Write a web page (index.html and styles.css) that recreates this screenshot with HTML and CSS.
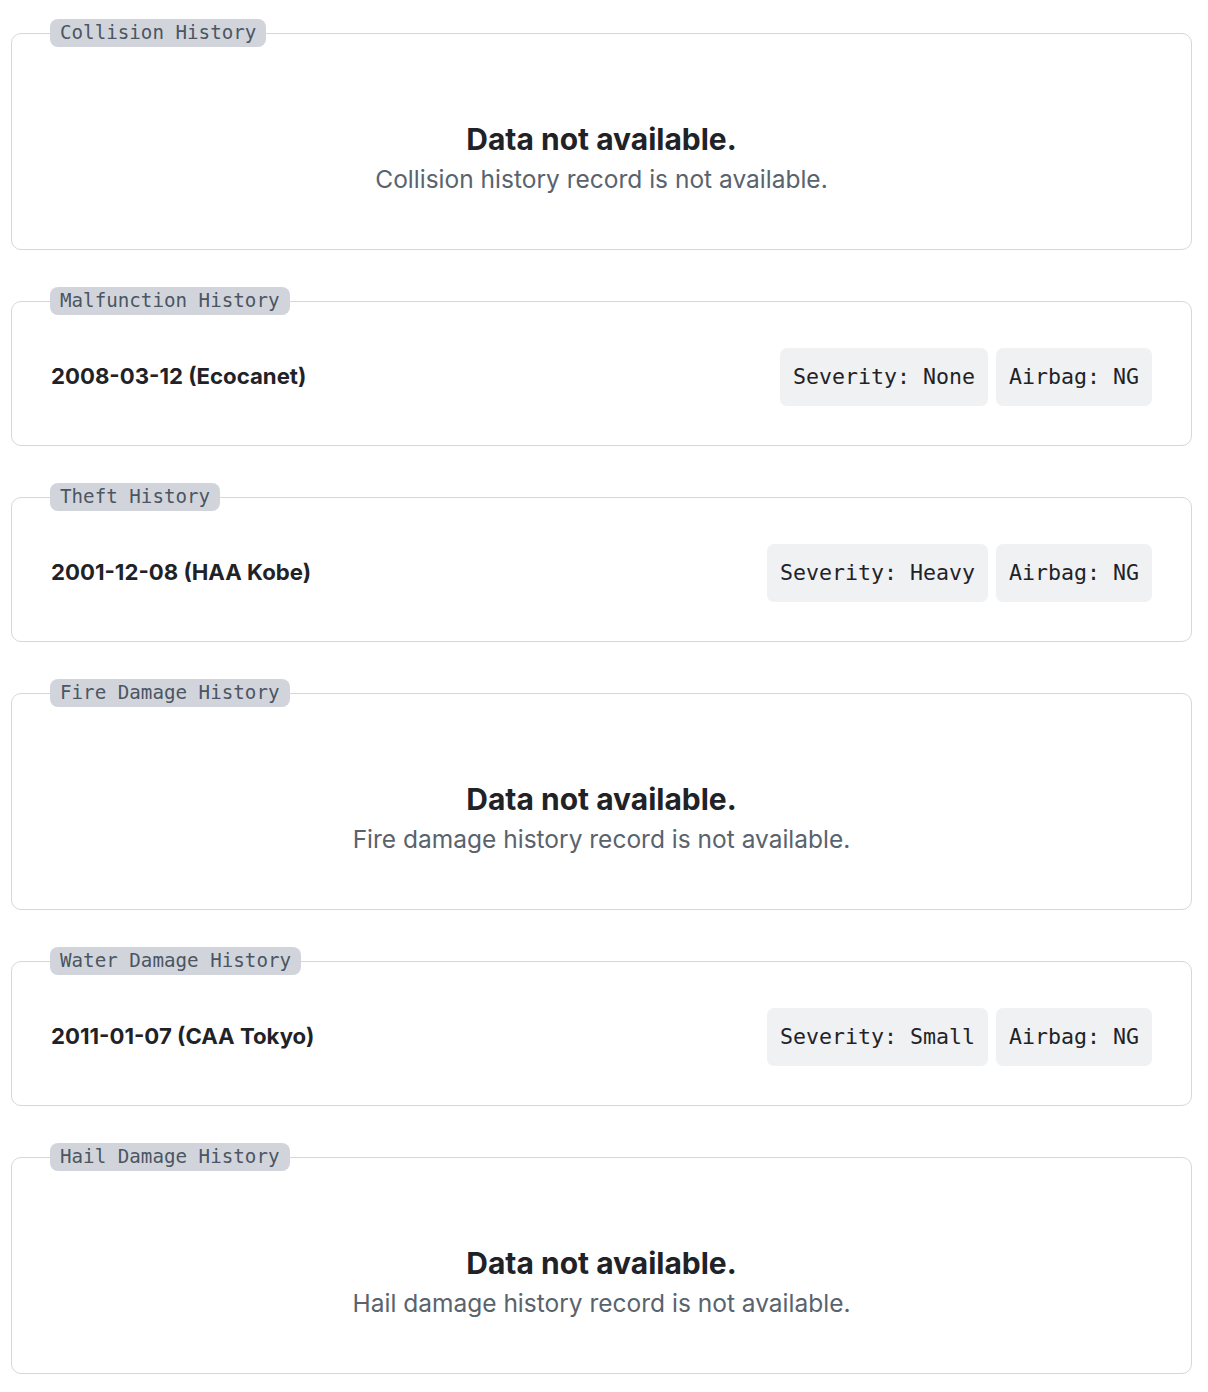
FILE: index.html
```html
<!DOCTYPE html>
<html lang="en">
<head>
<meta charset="utf-8">
<title>Vehicle History</title>
<link rel="stylesheet" href="styles.css">
</head>
<body>
<main class="history-list">
  <fieldset class="section section-empty">
    <legend class="section-label">Collision History</legend>
    <div class="empty-state">
      <div class="empty-title">Data not available.</div>
      <div class="empty-text">Collision history record is not available.</div>
    </div>
  </fieldset>

  <fieldset class="section">
    <legend class="section-label">Malfunction History</legend>
    <div class="record">
      <div class="record-date">2008-03-12 (Ecocanet)</div>
      <div class="badges">
        <span class="badge">Severity: None</span>
        <span class="badge">Airbag: NG</span>
      </div>
    </div>
  </fieldset>

  <fieldset class="section">
    <legend class="section-label">Theft History</legend>
    <div class="record">
      <div class="record-date">2001-12-08 (HAA Kobe)</div>
      <div class="badges">
        <span class="badge">Severity: Heavy</span>
        <span class="badge">Airbag: NG</span>
      </div>
    </div>
  </fieldset>

  <fieldset class="section section-empty">
    <legend class="section-label">Fire Damage History</legend>
    <div class="empty-state">
      <div class="empty-title">Data not available.</div>
      <div class="empty-text">Fire damage history record is not available.</div>
    </div>
  </fieldset>

  <fieldset class="section">
    <legend class="section-label">Water Damage History</legend>
    <div class="record">
      <div class="record-date">2011-01-07 (CAA Tokyo)</div>
      <div class="badges">
        <span class="badge">Severity: Small</span>
        <span class="badge">Airbag: NG</span>
      </div>
    </div>
  </fieldset>

  <fieldset class="section section-empty">
    <legend class="section-label">Hail Damage History</legend>
    <div class="empty-state">
      <div class="empty-title">Data not available.</div>
      <div class="empty-text">Hail damage history record is not available.</div>
    </div>
  </fieldset>
</main>
</body>
</html>
```

FILE: styles.css
```css
html, body {
  margin: 0;
  padding: 0;
  background: #ffffff;
}

body {
  font-family: Inter, "Noto Sans", "Liberation Sans", sans-serif;
  color: #1f2328;
}

.history-list {
  display: flex;
  flex-direction: column;
  gap: 37px;
  padding: 19px 16px 20px 11px;
}

.section {
  margin: 0;
  min-width: 0;
  border: 1px solid #d1d9e0;
  border-radius: 10px;
  padding: 33px 39px 39px 39px;
}

.section-label {
  padding: 0 10px;
  margin-left: -1px;
  background: #d1d5db;
  color: #4b5563;
  border-radius: 8px;
  font-family: "DejaVu Sans Mono", "Liberation Mono", monospace;
  font-size: 19.2px;
  line-height: 28px;
}

.record {
  display: flex;
  align-items: center;
  justify-content: space-between;
}

.record-date {
  font-weight: 700;
  font-size: 22.2px;
  padding-bottom: 4px;
  color: #1f2328;
}

.badges {
  display: flex;
  gap: 8px;
}

.badge {
  background: #eff1f3;
  border-radius: 7px;
  padding: 0 13px;
  font-family: "DejaVu Sans Mono", "Liberation Mono", monospace;
  font-size: 21.6px;
  line-height: 58px;
  color: #1f2328;
}

.section-empty {
  padding: 0 39px;
}

.empty-state {
  display: flex;
  flex-direction: column;
  align-items: center;
  padding: 74px 0 54px;
}

.empty-title {
  font-weight: 700;
  font-size: 30px;
  line-height: 36px;
  color: #1f2328;
}

.empty-text {
  margin-top: 6px;
  font-size: 24.5px;
  line-height: 32px;
  color: #59636e;
}
```
